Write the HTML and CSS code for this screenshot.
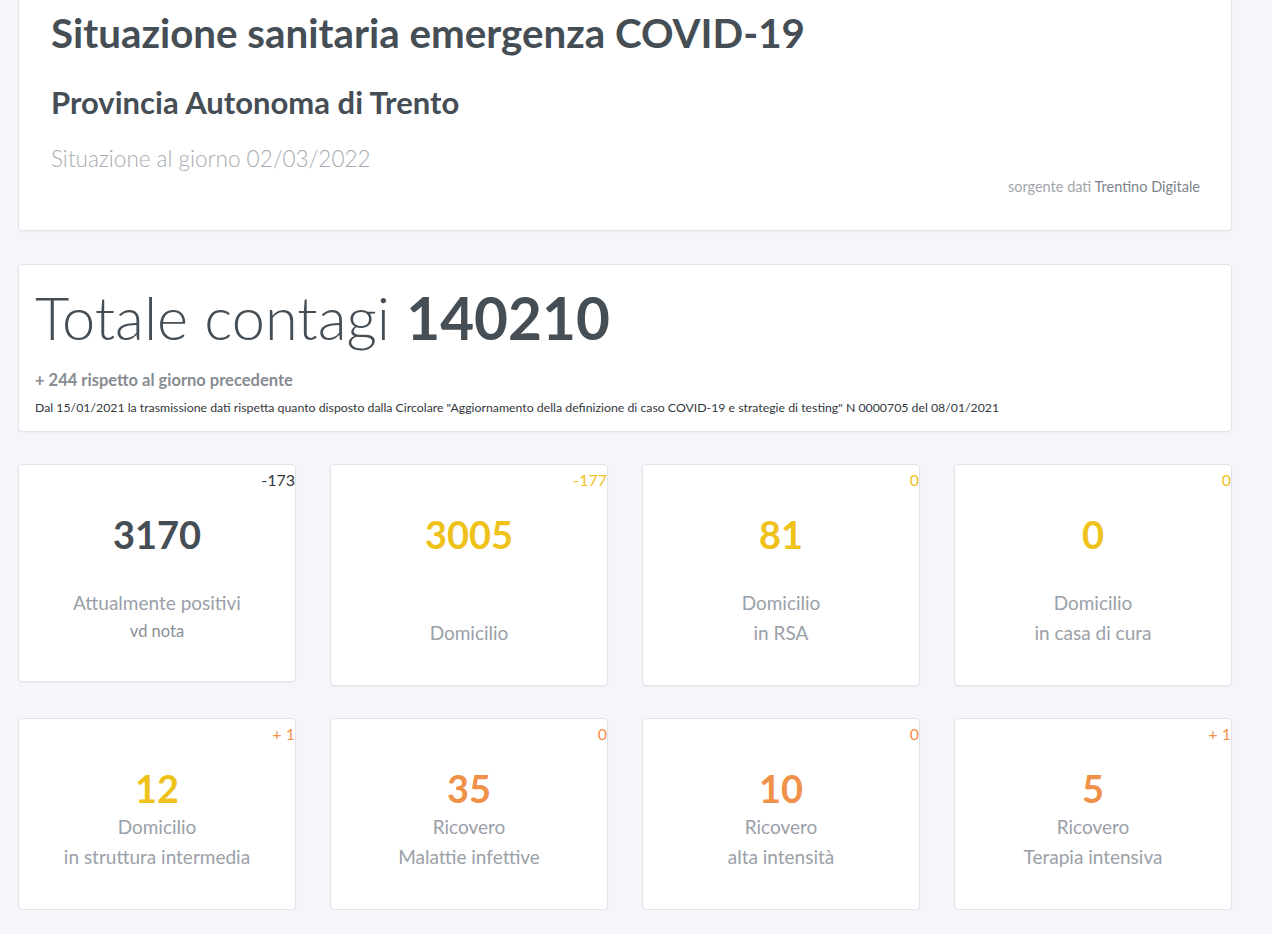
FILE: index.html
```html
<!DOCTYPE html>
<html lang="it">
<head>
<meta charset="utf-8">
<title>Situazione sanitaria emergenza COVID-19</title>
<link rel="stylesheet" href="styles.css">
</head>
<body>
<main class="page">
  <section class="card header-card">
    <h1 class="title">Situazione sanitaria emergenza COVID-19</h1>
    <h2 class="subtitle">Provincia Autonoma di Trento</h2>
    <p class="date">Situazione al giorno 02/03/2022</p>
    <p class="source">sorgente dati <span class="source-name">Trentino Digitale</span></p>
  </section>

  <section class="card total-card">
    <h2 class="total"><span class="total-label">Totale contagi</span> <strong class="total-value">140210</strong></h2>
    <p class="total-delta">+ 244 rispetto al giorno precedente</p>
    <p class="note">Dal 15/01/2021 la trasmissione dati rispetta quanto disposto dalla Circolare "Aggiornamento della definizione di caso COVID-19 e strategie di testing" N 0000705 del 08/01/2021</p>
  </section>

  <section class="stats stats-top">
    <div class="card stat">
      <div class="delta dark">-173</div>
      <div class="value dark">3170</div>
      <div class="label">Attualmente positivi<span class="label-note">vd nota</span></div>
    </div>
    <div class="card stat">
      <div class="delta yellow">-177</div>
      <div class="value yellow">3005</div>
      <div class="label"><span class="empty">&nbsp;</span>Domicilio</div>
    </div>
    <div class="card stat">
      <div class="delta yellow">0</div>
      <div class="value yellow">81</div>
      <div class="label">Domicilio<br>in RSA</div>
    </div>
    <div class="card stat">
      <div class="delta yellow">0</div>
      <div class="value yellow">0</div>
      <div class="label">Domicilio<br>in casa di cura</div>
    </div>
  </section>

  <section class="stats stats-bottom">
    <div class="card stat">
      <div class="delta orange">+ 1</div>
      <div class="value yellow">12</div>
      <div class="label">Domicilio<br>in struttura intermedia</div>
    </div>
    <div class="card stat">
      <div class="delta orange">0</div>
      <div class="value orange">35</div>
      <div class="label">Ricovero<br>Malattie infettive</div>
    </div>
    <div class="card stat">
      <div class="delta orange">0</div>
      <div class="value orange">10</div>
      <div class="label">Ricovero<br>alta intensità</div>
    </div>
    <div class="card stat">
      <div class="delta orange">+ 1</div>
      <div class="value orange">5</div>
      <div class="label">Ricovero<br>Terapia intensiva</div>
    </div>
  </section>
</main>
</body>
</html>
```

FILE: styles.css
```css
* { box-sizing: border-box; }

html, body {
  margin: 0;
  padding: 0;
  background: #f4f6f9;
}

body {
  font-family: "Lato", "Open Sans", sans-serif;
  color: #464e56;
}

.page {
  width: 1214px;
  margin-left: 18px;
  display: flex;
  flex-direction: column;
}

.card {
  background: #ffffff;
  border: 1px solid #e1e4ea;
  border-radius: 4px;
  box-shadow: 0 1px 2px rgba(0, 0, 0, 0.04);
}

/* Header card */
.header-card {
  border-top: 0;
  border-radius: 0 0 4px 4px;
  padding: 9px 31px 20px 32px;
  height: 231px;
}

.title {
  margin: 0;
  font-size: 40.3px;
  line-height: 48px;
  font-weight: 700;
  color: #454d55;
}

.subtitle {
  margin: 27px 0 0;
  font-size: 31px;
  line-height: 36px;
  font-weight: 700;
  color: #454d55;
}

.date {
  margin: 24px 0 0;
  font-size: 22.5px;
  line-height: 30px;
  font-weight: 300;
  color: #a7abb1;
}

.source {
  margin: 3px 0 0;
  text-align: right;
  font-size: 14.5px;
  line-height: 20px;
  color: #a2a6ac;
}

.source-name {
  color: #7d838a;
}

/* Total card */
.total-card {
  margin-top: 33px;
  padding: 12px 16px 14px 16px;
  height: 168px;
}

.total {
  margin: 0;
  font-size: 59.5px;
  line-height: 80px;
  font-weight: 300;
  color: #454d55;
}

.total-label {
  font-weight: 300;
}

.total-value {
  font-weight: 700;
  font-size: 58.5px;
}

.total-delta {
  margin: 12px 0 0;
  font-size: 16.5px;
  line-height: 22px;
  font-weight: 700;
  color: #878c92;
}

.note {
  margin: 9px 0 0;
  font-size: 12.3px;
  line-height: 16px;
  color: #33383d;
}

/* Stat grid */
.stats {
  display: grid;
  grid-template-columns: repeat(4, 278px);
  column-gap: 34px;
  align-items: start;
}

.stats-top {
  margin-top: 32px;
}

.stats-bottom {
  margin-top: 32px;
}

.stat {
  display: flex;
  flex-direction: column;
  align-items: stretch;
  text-align: center;
  padding: 5px 0 37px;
}

.delta {
  text-align: right;
  font-size: 16px;
  line-height: 20px;
  font-weight: 400;
}

.value {
  margin-top: 20px;
  font-size: 38px;
  line-height: 48px;
  font-weight: 700;
}

.label {
  display: flex;
  flex-direction: column;
  font-size: 19px;
  line-height: 30px;
  color: #9aa0a8;
}

.stats-top .label {
  margin-top: 30px;
}

.stats-bottom .stat {
  padding-bottom: 37px;
}

.stats-bottom .value {
  margin-top: 20px;
}

.stats-bottom .label {
  margin-top: 0;
}

.label-note {
  font-size: 16.5px;
  line-height: 26px;
  color: #8a9097;
}

.dark { color: #454d55; }
.delta.dark { color: #33383d; }
.yellow { color: #efc21b; }
.orange { color: #f09149; }
```
